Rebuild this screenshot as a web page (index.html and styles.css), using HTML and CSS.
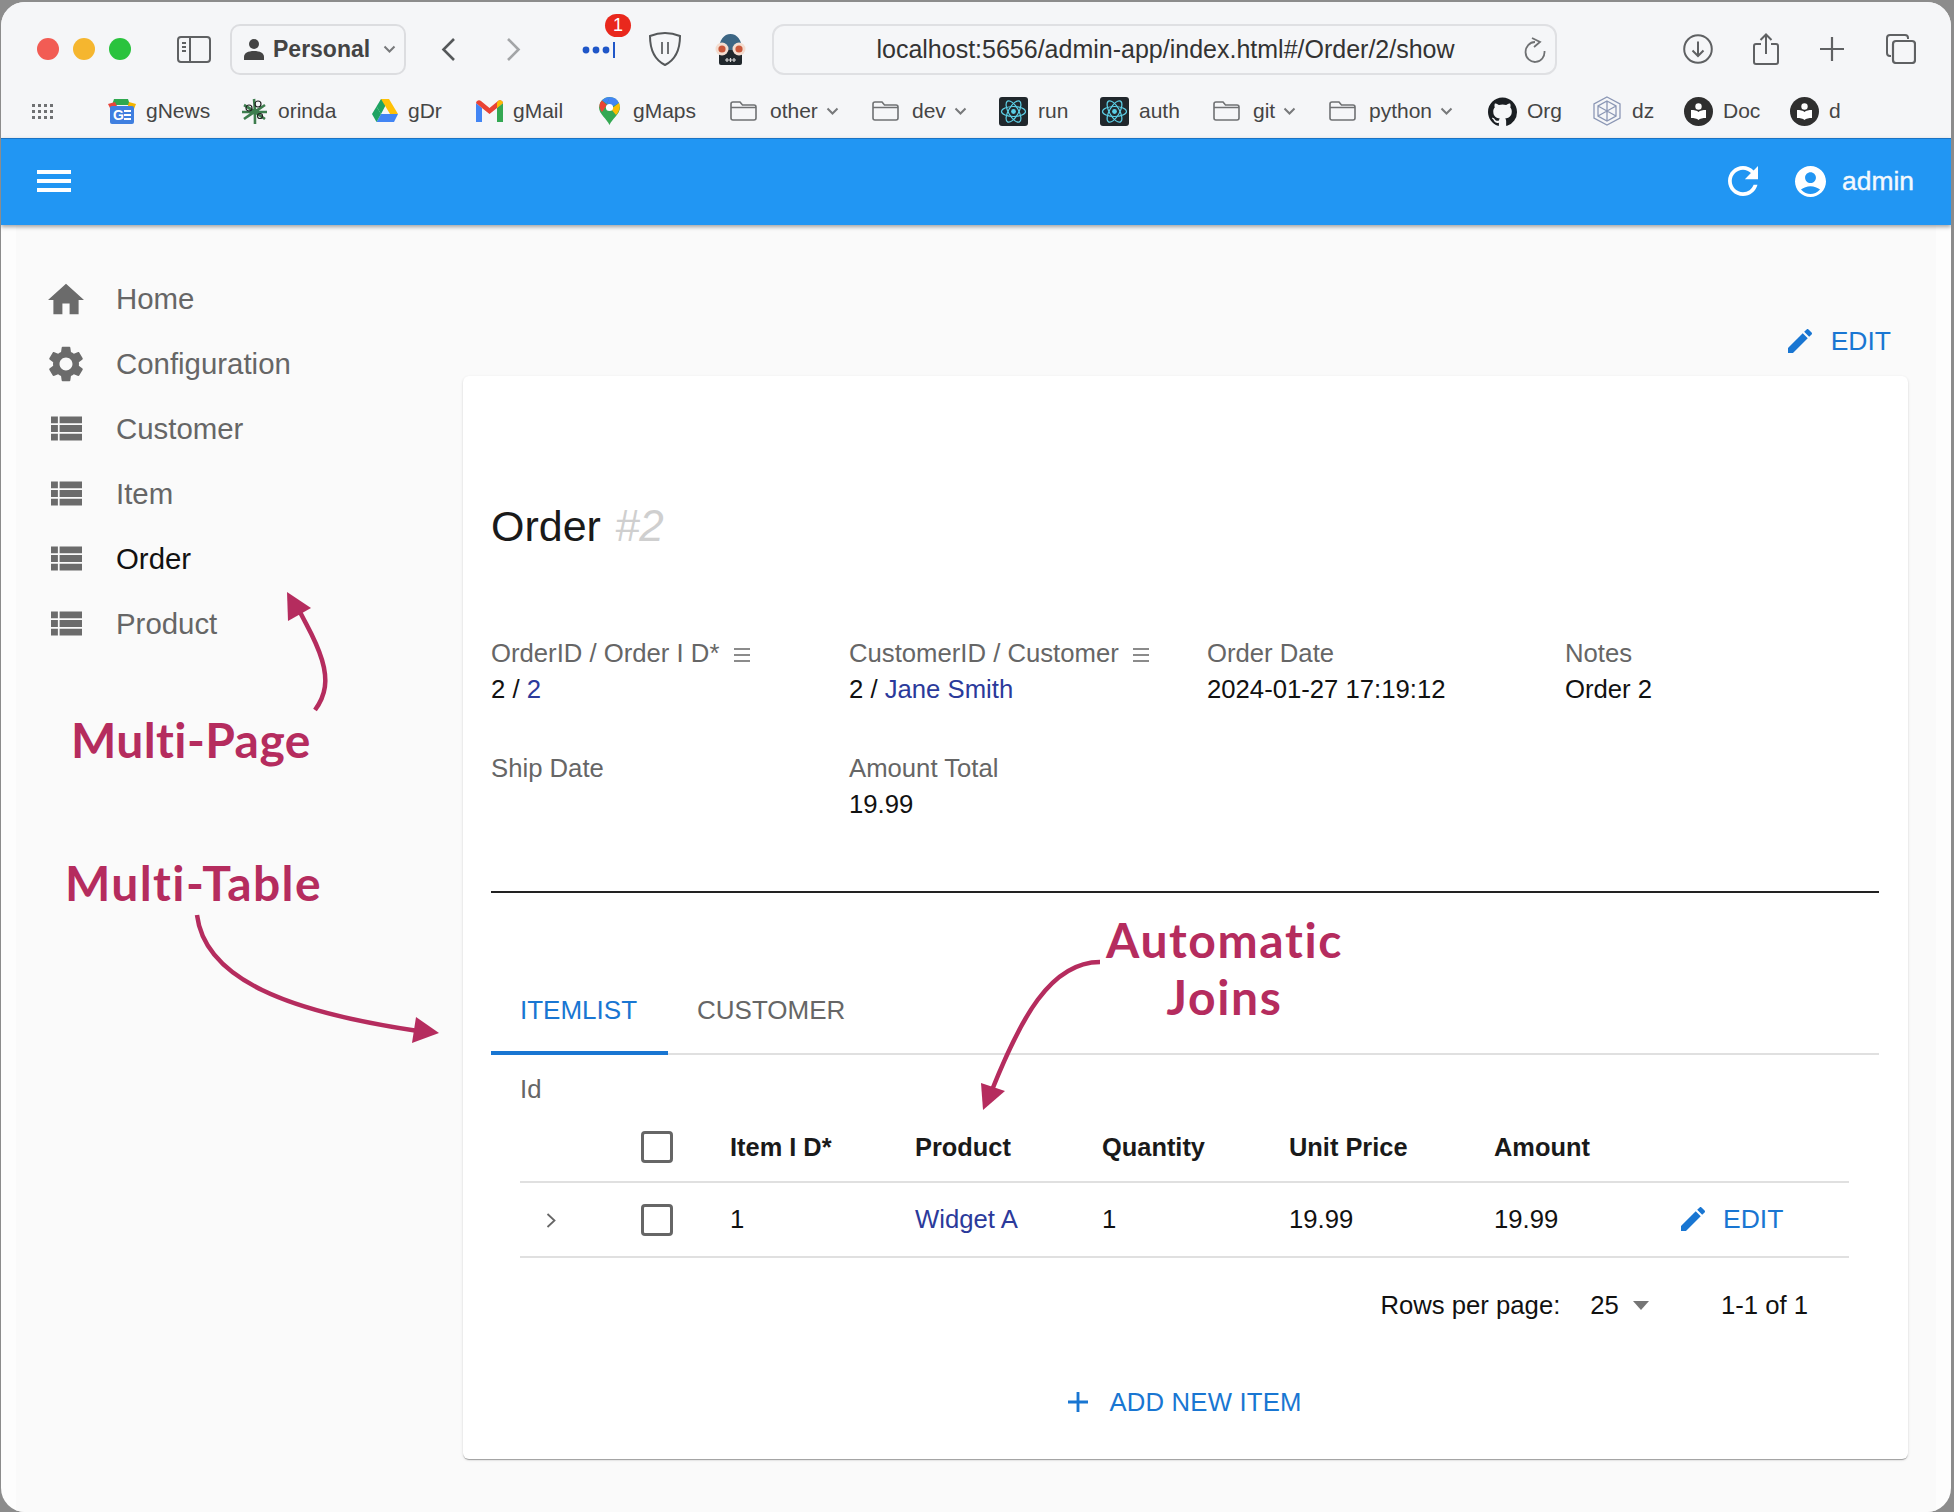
FILE: index.html
```html
<!DOCTYPE html>
<html lang="en">
<head>
  <meta charset="UTF-8" />
  <title>Order #2</title>
  <link rel="stylesheet" href="styles.css">
</head>
<body>
  <svg class="defs" width="0" height="0">
    <symbol id="i-list" viewBox="3 5 18 14"><path d="M3 14h4v-4H3v4zm0 5h4v-4H3v4zM3 9h4V5H3v4zm5 5h13v-4H8v4zm0 5h13v-4H8v4zM8 5v4h13V5H8z"/></symbol>
    <symbol id="i-edit" viewBox="3 3 18 18"><path d="M3 17.25V21h3.75L17.81 9.94l-3.75-3.75L3 17.25zM20.71 7.04c.39-.39.39-1.02 0-1.41l-2.34-2.34a.9959.9959 0 0 0-1.41 0l-1.83 1.83 3.75 3.75 1.83-1.83z"/></symbol>
    <symbol id="i-folder" viewBox="0 0 27 20"><path d="M1 17V3a2 2 0 0 1 2-2h7l2.500 3H24a2 2 0 0 1 2 2v11a2 2 0 0 1-2 2H3a2 2 0 0 1-2-2zM1 6.500h25" fill="none" stroke="#6f7173" stroke-width="1.600"/></symbol>
    <symbol id="i-chev" viewBox="0 0 13 8"><path d="M1.500 1.500 6.500 6.500 11.500 1.500" fill="none" stroke="#77797b" stroke-width="2"/></symbol>
    <symbol id="i-react" viewBox="0 0 29 29">
      <rect width="29" height="29" rx="3" fill="#20272c"/>
      <g fill="none" stroke="#5ccfe6" stroke-width="1.200">
        <ellipse cx="14.500" cy="14.500" rx="12" ry="5"/>
        <ellipse cx="14.500" cy="14.500" rx="12" ry="5" transform="rotate(60 14.500 14.500)"/>
        <ellipse cx="14.500" cy="14.500" rx="12" ry="5" transform="rotate(120 14.500 14.500)"/>
      </g>
      <circle cx="14.500" cy="14.500" r="2.400" fill="#5ccfe6"/>
    </symbol>
    <symbol id="i-book" viewBox="0 0 29 29">
      <circle cx="14.500" cy="14.500" r="14.500" fill="#2f2f2f"/>
      <path d="M7 13c3 0 6 .5 7.500 2 1.500-1.500 4.500-2 7.500-2v8c-3 0-6 .5-7.500 2-1.500-1.500-4.500-2-7.500-2z" fill="#fff"/>
      <circle cx="14.500" cy="9.500" r="3.200" fill="#fff"/>
    </symbol>
  </svg>

  <div class="window">
    <header class="chrome">
      <div class="toolbar">
        <div class="lights">
          <span class="light red"></span>
          <span class="light yellow"></span>
          <span class="light green"></span>
        </div>
        <svg class="sidebar-toggle" viewBox="0 0 34 27"><rect x="1" y="1" width="32" height="25" rx="3" fill="none" stroke="#5f6163" stroke-width="2"/><path d="M13 1v25" stroke="#5f6163" stroke-width="2"/><path d="M5 7h4M5 11h4M5 15h4" stroke="#5f6163" stroke-width="2"/></svg>
        <div class="profile">
          <svg class="profile-icon" viewBox="0 0 20 22"><circle cx="10" cy="6" r="5"/><path d="M0 22v-3c0-4 4-6 10-6s10 2 10 6v3z"/></svg>
          <span>Personal</span>
          <svg class="profile-chev"><use href="#i-chev"/></svg>
        </div>
        <svg class="nav-arrow back" viewBox="0 0 15 25"><path d="M13 2 2.500 12.500 13 23" fill="none" stroke="#55585a" stroke-width="2.600"/></svg>
        <svg class="nav-arrow forward" viewBox="0 0 15 25"><path d="M2 2l10.500 10.500L2 23" fill="none" stroke="#a3a5a7" stroke-width="2.600"/></svg>
        <div class="ext-pass">
          <svg viewBox="0 0 34 16" width="34" height="16"><g fill="#1f56c8"><circle cx="4" cy="8" r="3.400"/><circle cx="14" cy="8" r="3.400"/><circle cx="24" cy="8" r="3.400"/></g><rect x="31" y="0" width="2" height="16" fill="#1f56c8"/></svg>
          <span class="badge">1</span>
        </div>
        <svg class="ext-shield" viewBox="0 0 32 34"><path d="M16 1c5 0 10 1 15 3 0 12-3 23-15 29C4 27 1 16 1 4c5-2 10-3 15-3z" fill="none" stroke="#55585a" stroke-width="2"/><path d="M13 10v12M19 10v12" stroke="#6f7173" stroke-width="2"/></svg>
        <svg class="ext-spy" viewBox="0 0 33 31"><path d="M5 16C5 6 10 0 16.500 0S28 6 28 16z" fill="#3c6684"/><path d="M5 16h23v13a2 2 0 0 1-2 2H7a2 2 0 0 1-2-2z" fill="#20272c"/><circle cx="8" cy="15" r="6.500" fill="#f3ddd0"/><circle cx="25" cy="15" r="6.500" fill="#f3ddd0"/><circle cx="8" cy="15" r="3.600" fill="#c9573a"/><circle cx="25" cy="15" r="3.600" fill="#c9573a"/><path d="M11 26h11M13 24v4M16.500 24v4M20 24v4" stroke="#d8d8d8" stroke-width="1.200"/></svg>
        <div class="urlbar">
          <span class="url">localhost:5656/admin-app/index.html#/Order/2/show</span>
          <svg class="url-reload" viewBox="0 0 22 26"><path d="M11 5A9.500 10 0 1 0 20.500 14M8 1l8 4-6 5" fill="none" stroke="#6f7173" stroke-width="1.800"/></svg>
        </div>
        <svg class="tool download" viewBox="0 0 30 30"><circle cx="15" cy="15" r="13.800" fill="none" stroke="#5f6163" stroke-width="2"/><path d="M15 7.500v14M9.500 16.500l5.500 5.500 5.500-5.500" fill="none" stroke="#5f6163" stroke-width="2"/></svg>
        <svg class="tool share" viewBox="0 0 26 32"><path d="M8 11H3a2 2 0 0 0-2 2v16a2 2 0 0 0 2 2h20a2 2 0 0 0 2-2V13a2 2 0 0 0-2-2h-5M13 21V2M7.500 7 13 1.500 18.500 7" fill="none" stroke="#5f6163" stroke-width="2"/></svg>
        <svg class="tool plus" viewBox="0 0 24 24"><path d="M12 0v24M0 12h24" stroke="#5f6163" stroke-width="2.200"/></svg>
        <svg class="tool tabs-icon" viewBox="0 0 30 30"><path d="M5 22H4a3 3 0 0 1-3-3V4a3 3 0 0 1 3-3h15a3 3 0 0 1 3 3v1" fill="none" stroke="#5f6163" stroke-width="2"/><rect x="7" y="7" width="22" height="22" rx="3" fill="none" stroke="#5f6163" stroke-width="2.200"/></svg>
      </div>

      <nav class="bookmarks">
        <svg class="apps" viewBox="0 0 21 15"><g fill="#6f7173"><rect x="0" y="0" width="3" height="3"/><rect x="6" y="0" width="3" height="3"/><rect x="12" y="0" width="3" height="3"/><rect x="18" y="0" width="3" height="3"/><rect x="0" y="6" width="3" height="3"/><rect x="6" y="6" width="3" height="3"/><rect x="12" y="6" width="3" height="3"/><rect x="18" y="6" width="3" height="3"/><rect x="0" y="12" width="3" height="3"/><rect x="6" y="12" width="3" height="3"/><rect x="12" y="12" width="3" height="3"/><rect x="18" y="12" width="3" height="3"/></g></svg>
        <div class="bookmark">
          <svg class="bm-icon" width="28" height="25" viewBox="0 0 28 25"><path d="M6 0h14l2 6H4z" fill="#2fa84f"/><path d="M0 5l7-2 3 6H2z" fill="#e8453c"/><path d="M21 3l7 2-2 5h-7z" fill="#f4b400"/><rect x="2" y="7" width="24" height="18" rx="2" fill="#3f7fe0"/><text x="5" y="21" class="news-g">G</text><path d="M16 12h7M16 16h7M16 20h7" stroke="#fff" stroke-width="2"/></svg>
          <span>gNews</span>
        </div>
        <div class="bookmark">
          <svg class="bm-icon" width="27" height="27" viewBox="0 0 27 27"><g fill="none" stroke="#3d7d4e" stroke-width="2.600"><path d="M3 7c7 4 14 9 21 14M24 7C18 11 10 16 3 21M13 1c1 8 1 16 1 25M1 14h25"/></g><g fill="none" stroke="#222" stroke-width="1.200"><circle cx="8" cy="10" r="3"/><circle cx="19" cy="18" r="2.500"/><circle cx="17" cy="6" r="3"/></g></svg>
          <span>orinda</span>
        </div>
        <div class="bookmark">
          <svg class="bm-icon" width="26" height="24" viewBox="0 0 26 24"><path d="M9 0h8L9 15 4.500 7.500z" fill="#1ea362"/><path d="M9 0h8l9 15h-8z" fill="#ffc107"/><path d="M18 15h8l-4 8H4.500L9 15z" fill="#4285f4"/><path d="M0 15 4.500 7.500 9 15l-4.500 8z" fill="#1ea362"/></svg>
          <span>gDr</span>
        </div>
        <div class="bookmark">
          <svg class="bm-icon" width="27" height="22" viewBox="0 0 27 22"><path d="M0 3v19h6V8z" fill="#4285f4"/><path d="M21 8v14h6V3z" fill="#34a853"/><path d="M0 3a3 3 0 0 1 5-2l8.500 7L22 1a3 3 0 0 1 5 2l-6 5-7.500 6L6 8z" fill="#ea4335"/><path d="M22 1a3 3 0 0 1 5 2l-6 5V3z" fill="#fbbc04"/></svg>
          <span>gMail</span>
        </div>
        <div class="bookmark wide-gap">
          <svg class="bm-icon" width="21" height="28" viewBox="0 0 21 28"><path d="M10.500 28C8 22 0 17 0 10.500a10.500 10.500 0 0 1 21 0C21 17 13 22 10.500 28z" fill="#34a853"/><path d="M3 3.500a10.500 10.500 0 0 1 7.500-3.500L8 7z" fill="#4285f4"/><path d="M3 3.500 8 8 3 15C.5 12-1 7 3 3.500z" fill="#ea4335"/><path d="M10.500 0A10.500 10.500 0 0 1 20 6l-7 4-5-3z" fill="#4285f4"/><path d="M20 6c2 4 0 9-3 12l-5-6z" fill="#fbbc04"/><circle cx="10.500" cy="10.500" r="3.600" fill="#fff"/></svg>
          <span>gMaps</span>
        </div>
        <div class="bookmark wide-gap">
          <svg class="bm-icon" width="27" height="20"><use href="#i-folder"/></svg>
          <span>other</span>
          <svg class="bm-chev"><use href="#i-chev"/></svg>
        </div>
        <div class="bookmark wide-gap">
          <svg class="bm-icon" width="27" height="20"><use href="#i-folder"/></svg>
          <span>dev</span>
          <svg class="bm-chev"><use href="#i-chev"/></svg>
        </div>
        <div class="bookmark">
          <svg class="bm-icon" width="29" height="29"><use href="#i-react"/></svg>
          <span>run</span>
        </div>
        <div class="bookmark">
          <svg class="bm-icon" width="29" height="29"><use href="#i-react"/></svg>
          <span>auth</span>
        </div>
        <div class="bookmark wide-gap">
          <svg class="bm-icon" width="27" height="20"><use href="#i-folder"/></svg>
          <span>git</span>
          <svg class="bm-chev"><use href="#i-chev"/></svg>
        </div>
        <div class="bookmark wide-gap">
          <svg class="bm-icon" width="27" height="20"><use href="#i-folder"/></svg>
          <span>python</span>
          <svg class="bm-chev"><use href="#i-chev"/></svg>
        </div>
        <div class="bookmark">
          <svg class="bm-icon" width="29" height="29" viewBox="0 0 24 24"><path fill="#1b1f23" d="M12 .5C5.370.5 0 5.870 0 12.500c0 5.300 3.440 9.800 8.200 11.390.6.110.82-.26.82-.58v-2.030c-3.340.73-4.040-1.610-4.040-1.610-.55-1.390-1.340-1.760-1.340-1.760-1.090-.74.08-.73.08-.73 1.210.08 1.840 1.240 1.840 1.240 1.070 1.840 2.810 1.310 3.500 1 .11-.78.42-1.310.76-1.610-2.670-.3-5.470-1.330-5.470-5.930 0-1.310.47-2.380 1.240-3.220-.13-.3-.54-1.520.12-3.180 0 0 1.010-.32 3.300 1.230a11.500 11.500 0 0 1 6.010 0c2.290-1.550 3.300-1.230 3.300-1.230.66 1.660.25 2.880.12 3.180.77.84 1.240 1.910 1.240 3.220 0 4.610-2.810 5.620-5.480 5.920.43.37.81 1.100.81 2.220v3.290c0 .32.22.69.83.58A12 12 0 0 0 24 12.500C24 5.870 18.630.5 12 .5z"/></svg>
          <span>Org</span>
        </div>
        <div class="bookmark">
          <svg class="bm-icon" width="30" height="30" viewBox="0 0 30 30"><g fill="none" stroke="#8b97b5" stroke-width="1.300"><path d="M15 1 28 8v14l-13 7-13-7V8z"/><path d="M15 5 24 10v10l-9 5-9-5V10zM6 10l18 10M24 10 6 20M15 5v20"/></g></svg>
          <span>dz</span>
        </div>
        <div class="bookmark">
          <svg class="bm-icon" width="29" height="29"><use href="#i-book"/></svg>
          <span>Doc</span>
        </div>
        <div class="bookmark">
          <svg class="bm-icon" width="29" height="29"><use href="#i-book"/></svg>
          <span>d</span>
        </div>
      </nav>
    </header>

    <div class="appbar">
      <button class="menu-btn"><span></span><span></span><span></span></button>
      <svg class="appbar-refresh" viewBox="4 4 16 16"><path d="M17.650 6.350C16.200 4.900 14.210 4 12 4c-4.420 0-7.990 3.580-7.990 8s3.570 8 7.990 8c3.730 0 6.840-2.550 7.730-6h-2.080c-.82 2.330-3.040 4-5.650 4-3.310 0-6-2.690-6-6s2.690-6 6-6c1.660 0 3.140.69 4.220 1.780L13 11h7V4l-2.350 2.350z"/></svg>
      <svg class="appbar-user" viewBox="2 2 20 20"><path d="M12 2C6.480 2 2 6.480 2 12s4.480 10 10 10 10-4.480 10-10S17.520 2 12 2zm0 4c1.930 0 3.500 1.570 3.500 3.500S13.930 13 12 13s-3.500-1.570-3.500-3.500S10.070 6 12 6zm0 14c-2.030 0-4.430-.82-6.140-2.880C7.550 15.800 9.680 15 12 15s4.450.8 6.140 2.120C16.430 19.180 14.030 20 12 20z"/></svg>
      <span class="appbar-name">admin</span>
    </div>

    <main class="page">
      <aside class="sidenav">
        <a class="nav-item">
          <svg class="nav-icon" viewBox="2 3 20 17"><path d="M10 20v-6h4v6h5v-8h3L12 3 2 12h3v8z"/></svg>
          <span>Home</span>
        </a>
        <a class="nav-item">
          <svg class="nav-icon" viewBox="2.500 2 19 20"><path d="M19.140 12.940c.04-.3.06-.61.06-.94 0-.32-.02-.64-.07-.94l2.030-1.580c.18-.14.23-.41.12-.61l-1.920-3.320c-.12-.22-.37-.29-.59-.22l-2.390.96c-.5-.38-1.030-.7-1.620-.94l-.36-2.540c-.04-.24-.24-.41-.48-.41h-3.840c-.24 0-.43.17-.47.41l-.36 2.540c-.59.24-1.130.57-1.620.94l-2.390-.96c-.22-.08-.47 0-.59.22L2.740 8.870c-.12.21-.08.47.12.61l2.030 1.580c-.05.3-.09.63-.09.94s.02.64.07.94l-2.030 1.580c-.18.14-.23.41-.12.61l1.920 3.320c.12.22.37.29.59.22l2.390-.96c.5.38 1.030.7 1.620.94l.36 2.540c.05.24.24.41.48.41h3.840c.24 0 .44-.17.47-.41l.36-2.540c.59-.24 1.130-.56 1.620-.94l2.390.96c.22.08.47 0 .59-.22l1.920-3.320c.12-.22.07-.47-.12-.61l-2.010-1.580zM12 15.600c-1.980 0-3.600-1.620-3.600-3.600s1.620-3.600 3.600-3.600 3.600 1.620 3.600 3.600-1.620 3.600-3.600 3.600z"/></svg>
          <span>Configuration</span>
        </a>
        <a class="nav-item">
          <svg class="nav-icon list"><use href="#i-list"/></svg>
          <span>Customer</span>
        </a>
        <a class="nav-item">
          <svg class="nav-icon list"><use href="#i-list"/></svg>
          <span>Item</span>
        </a>
        <a class="nav-item active">
          <svg class="nav-icon list"><use href="#i-list"/></svg>
          <span>Order</span>
        </a>
        <a class="nav-item">
          <svg class="nav-icon list"><use href="#i-list"/></svg>
          <span>Product</span>
        </a>
      </aside>

      <section class="content">
        <div class="actions">
          <a class="edit-link">
            <svg class="edit-icon"><use href="#i-edit"/></svg>
            EDIT
          </a>
        </div>

        <article class="card">
          <h1 class="title">Order <em>#2</em></h1>

          <div class="fields">
            <div class="field">
              <div class="field-label">OrderID / Order I D*
                <svg class="mini-menu" viewBox="0 0 16 14"><path d="M0 1h16M0 7h16M0 13h16" stroke="#666" stroke-width="1.500"/></svg>
              </div>
              <div class="field-value">2 / <a class="ref">2</a></div>
            </div>
            <div class="field">
              <div class="field-label">CustomerID / Customer
                <svg class="mini-menu" viewBox="0 0 16 14"><path d="M0 1h16M0 7h16M0 13h16" stroke="#666" stroke-width="1.500"/></svg>
              </div>
              <div class="field-value">2 / <a class="ref">Jane Smith</a></div>
            </div>
            <div class="field">
              <div class="field-label">Order Date</div>
              <div class="field-value">2024-01-27 17:19:12</div>
            </div>
            <div class="field">
              <div class="field-label">Notes</div>
              <div class="field-value">Order 2</div>
            </div>
            <div class="field">
              <div class="field-label">Ship Date</div>
              <div class="field-value"></div>
            </div>
            <div class="field">
              <div class="field-label">Amount Total</div>
              <div class="field-value">19.99</div>
            </div>
          </div>

          <hr class="divider">

          <div class="tabs">
            <div class="tab active">ITEMLIST</div>
            <div class="tab">CUSTOMER</div>
          </div>

          <div class="id-label">Id</div>

          <table class="items">
            <colgroup>
              <col class="c-expand"><col class="c-check"><col class="c-item"><col class="c-std"><col class="c-std"><col class="c-wide"><col class="c-std"><col class="c-last">
            </colgroup>
            <thead>
              <tr>
                <th></th>
                <th><span class="checkbox"></span></th>
                <th>Item I D*</th>
                <th>Product</th>
                <th>Quantity</th>
                <th>Unit Price</th>
                <th>Amount</th>
                <th></th>
              </tr>
            </thead>
            <tbody>
              <tr>
                <td class="expand"><svg viewBox="0 0 10 15" width="10" height="15"><path d="M1.500 1 8.500 7.500 1.500 14" fill="none" stroke="#666" stroke-width="1.800"/></svg></td>
                <td><span class="checkbox"></span></td>
                <td>1</td>
                <td><a class="ref">Widget A</a></td>
                <td>1</td>
                <td>19.99</td>
                <td>19.99</td>
                <td><a class="edit-link row-edit"><svg class="edit-icon"><use href="#i-edit"/></svg>EDIT</a></td>
              </tr>
            </tbody>
          </table>

          <div class="pagination">
            <span>Rows per page:</span>
            <span class="page-size">25<i class="caret"></i></span>
            <span>1-1 of 1</span>
          </div>

          <div class="add-row">
            <a class="add-link">
              <svg class="add-icon" viewBox="5 5 14 14"><path d="M19 13h-6v6h-2v-6H5v-2h6V5h2v6h6v2z"/></svg>
              ADD NEW ITEM
            </a>
          </div>
        </article>
      </section>
    </main>
  </div>

  <!-- hand drawn notes lying over the page -->
  <svg class="notes" viewBox="0 0 1954 1512">
    <g fill="none" stroke="#b52c5e" stroke-width="4.500">
      <path d="M315 710C326 695 328 680 322 660 316 640 308 628 300 612"/>
      <path d="M197 915C205 980 290 1012 418 1031"/>
      <path d="M1100 962C1050 962 1020 1020 992 1090"/>
    </g>
    <g fill="#b52c5e">
      <path d="M287 592 311 608 288 621z"/>
      <path d="M439 1033 416 1017 412 1043z"/>
      <path d="M983 1110 981 1083 1005 1091z"/>
    </g>
  </svg>
  <div class="note note-page">Multi-Page</div>
  <div class="note note-table">Multi-Table</div>
  <div class="note note-joins">Automatic<br>Joins</div>
</body>
</html>
```
FILE: styles.css
```css
* {
  box-sizing: border-box;
}

html, body {
  margin: 0;
  height: 1512px;
  overflow: hidden;
}

body {
  position: relative;
  background: #8c8c8c;
  font-family: "Liberation Sans", Arial, sans-serif;
  color: #1a1a1a;
}

.defs {
  position: absolute;
}

a {
  color: inherit;
  text-decoration: none;
}

/* Browser window */
.window {
  display: flex;
  flex-direction: column;
  height: 1510px;
  margin: 2px 3px 0 1px;
  background: #fdfdfd;
  border-radius: 24px;
  overflow: hidden;
}

.chrome {
  background: #f5f6f8;
  height: 136px;
}

.toolbar {
  display: flex;
  align-items: center;
  height: 94px;
  padding: 0 0 0 36px;
}

.lights {
  display: flex;
  gap: 14px;
  margin-right: 46px;
}

.light {
  width: 22px;
  height: 22px;
  border-radius: 50%;
}

.light.red { background: #f25c54; }
.light.yellow { background: #f5b62f; }
.light.green { background: #2ac33e; }

.sidebar-toggle {
  width: 34px;
  height: 27px;
  margin-right: 19px;
}

.profile {
  display: flex;
  align-items: center;
  width: 176px;
  height: 51px;
  padding-left: 12px;
  border: 2px solid #dcdde0;
  border-radius: 10px;
  font-size: 23px;
  font-weight: bold;
  color: #444;
}

.profile-icon {
  width: 20px;
  height: 22px;
  fill: #444;
  margin-right: 9px;
}

.profile-chev {
  width: 13px;
  height: 8px;
  margin-left: 13px;
}

.nav-arrow {
  width: 15px;
  height: 25px;
}

.nav-arrow.back { margin-left: 35px; }
.nav-arrow.forward { margin-left: 50px; }

.ext-pass {
  position: relative;
  display: flex;
  margin-left: 61px;
  margin-top: 2px;
}

.badge {
  position: absolute;
  top: -28px;
  left: 23px;
  width: 26px;
  height: 23px;
  border-radius: 11.500px;
  background: #e9281d;
  color: #fff;
  font-size: 18px;
  line-height: 23px;
  text-align: center;
}

.ext-shield {
  width: 32px;
  height: 34px;
  margin-left: 33px;
}

.ext-spy {
  width: 33px;
  height: 31px;
  margin-left: 33px;
}

.urlbar {
  display: flex;
  align-items: center;
  justify-content: center;
  position: relative;
  width: 785px;
  height: 51px;
  margin-left: 25px;
  border: 2px solid #dfe0e3;
  border-radius: 12px;
}

.url {
  font-size: 25px;
  color: #333;
  margin-left: 2px;
}

.url-reload {
  position: absolute;
  right: 9px;
  top: 11px;
  width: 22px;
  height: 26px;
}

.tool { flex: none; }
.download { width: 30px; height: 30px; margin-left: 126px; }
.share { width: 26px; height: 32px; margin-left: 40px; }
.plus { width: 24px; height: 24px; margin-left: 41px; }
.tabs-icon { width: 30px; height: 30px; margin-left: 42px; }

/* Bookmarks bar, columns at the spots of each favourite */
.bookmarks {
  display: grid;
  grid-template-columns: 76px 133px 131px 104px 123px 131px 142px 127px 101px 113px 116px 159px 104px 92px 106px auto;
  align-items: center;
  height: 26px;
  padding-left: 31px;
  font-size: 21px;
  color: #454545;
}

.apps {
  width: 21px;
  height: 15px;
}

.bookmark {
  display: flex;
  align-items: center;
  gap: 10px;
  white-space: nowrap;
}

.bookmark.wide-gap {
  gap: 13px;
}

.bm-chev {
  width: 13px;
  height: 8px;
  margin-left: -5px;
}

.news-g {
  font-size: 14px;
  font-weight: bold;
  fill: #fff;
}

/* App bar */
.appbar {
  display: flex;
  align-items: center;
  height: 87px;
  flex: none;
  padding: 0 37px 2px 36px;
  background: #2196f3;
  border-top: 1px solid #1a73c4;
  box-shadow: 0 2px 4px rgba(0, 0, 0, 0.35);
  color: #fff;
  position: relative;
  z-index: 1;
}

.menu-btn {
  display: flex;
  flex-direction: column;
  gap: 5px;
  width: 34px;
  padding: 0;
  border: 0;
  background: none;
  margin-right: auto;
}

.menu-btn span {
  height: 4px;
  background: #fff;
}

.appbar-refresh {
  width: 30px;
  height: 30px;
  fill: #fff;
}

.appbar-user {
  width: 31px;
  height: 31px;
  fill: #fff;
  margin-left: 37px;
}

.appbar-name {
  margin-left: 16px;
  font-size: 26.400px;
  -webkit-text-stroke: 0.4px #fff;
  opacity: 0.95;
}

/* Page body */
.page {
  display: flex;
  flex: 1;
  margin: 0 15px;
  background: #fafafa;
}

.sidenav {
  width: 447px;
  flex: none;
  padding-top: 41px;
}

.nav-item {
  display: flex;
  align-items: center;
  height: 65px;
  padding-left: 32px;
  font-size: 29.400px;
  color: #666;
}

.nav-item.active {
  color: #111;
}

.nav-icon {
  width: 36px;
  height: 36px;
  fill: #6b6b6b;
  margin-right: 32px;
  flex: none;
}

.nav-icon.list {
  width: 31px;
  height: 25px;
  margin-left: 3px;
  margin-right: 34px;
}

.content {
  display: flex;
  flex-direction: column;
  flex: 1;
  padding-right: 28px;
}

.actions {
  display: flex;
  justify-content: flex-end;
  align-items: flex-end;
  height: 151px;
  padding: 0 17px 17px 0;
}

.edit-link {
  display: flex;
  align-items: center;
  gap: 19px;
  font-size: 26.500px;
  line-height: 36px;
  color: #1976d2;
}

.edit-icon {
  width: 24px;
  height: 24px;
  fill: #1976d2;
}

.row-edit {
  gap: 18px;
  margin-top: -2px;
}

/* Order card */
.card {
  display: flex;
  flex-direction: column;
  padding: 0 29px 9px 28px;
  background: #fff;
  border-radius: 6px;
  box-shadow: 0 2px 1px -1px rgba(0, 0, 0, 0.2), 0 1px 1px 0 rgba(0, 0, 0, 0.14), 0 1px 3px 0 rgba(0, 0, 0, 0.12);
}

.title {
  margin: 125px 0 0;
  font-size: 43px;
  font-weight: normal;
  line-height: 50px;
  color: #1a1a1a;
}

.title em {
  margin-left: 2px;
  font-size: 44px;
  color: #cfcfcf;
}

.fields {
  display: grid;
  grid-template-columns: 358px 358px 358px 1fr;
  row-gap: 43px;
  margin-top: 84px;
  font-size: 25.7px;
  line-height: 36px;
}

.field-label {
  color: #666;
  white-space: nowrap;
}

.field-value {
  min-height: 36px;
  color: #111;
}

.mini-menu {
  width: 16px;
  height: 14px;
  margin-left: 7px;
}

.ref {
  color: #2b3a9b;
}

.divider {
  margin: 69px 0 0;
  border: 0;
  height: 2px;
  background: #222;
}

.tabs {
  display: flex;
  margin-top: 72px;
  border-bottom: 2px solid #e0e0e0;
  font-size: 26px;
}

.tab {
  height: 90px;
  line-height: 90px;
  padding: 0 31px 0 29px;
  margin-bottom: -2px;
  color: #666;
}

.tab.active {
  color: #1976d2;
  border-bottom: 4px solid #1976d2;
}

.id-label {
  margin-top: 16px;
  padding-left: 29px;
  font-size: 25.7px;
  line-height: 36px;
  color: #666;
}

.items {
  width: 1329px;
  margin: 6px 0 0 29px;
  border-collapse: collapse;
  table-layout: fixed;
  font-size: 25.7px;
}

.c-expand { width: 105px; }
.c-check { width: 89px; }
.c-item { width: 185px; }
.c-std { width: 187px; }
.c-wide { width: 205px; }
.c-last { width: 184px; }

.items th, .items td {
  padding: 0 0 0 16px;
  border-bottom: 2px solid #e0e0e0;
  text-align: left;
  white-space: nowrap;
}

.items th {
  height: 69px;
  font-size: 25.400px;
  color: #1a1a1a;
}

.items td {
  height: 75px;
  color: #111;
}

.items td.expand {
  padding-left: 26px;
}

.checkbox {
  display: block;
  width: 32px;
  height: 32px;
  border: 3px solid #666;
  border-radius: 4px;
}

.pagination {
  display: flex;
  justify-content: flex-end;
  align-items: center;
  gap: 30px;
  height: 96px;
  padding: 0 71px 1px 0;
  font-size: 25.7px;
  color: #111;
}

.page-size {
  display: flex;
  align-items: center;
  gap: 14px;
  margin-right: 42px;
}

.caret {
  width: 0;
  height: 0;
  border-left: 8.500px solid transparent;
  border-right: 8.500px solid transparent;
  border-top: 9px solid #757575;
}

.add-row {
  display: flex;
  justify-content: center;
  align-items: center;
  height: 96px;
}

.add-link {
  display: flex;
  align-items: center;
  gap: 21px;
  font-size: 25.7px;
  letter-spacing: 0.2px;
  color: #1976d2;
}

.add-icon {
  width: 20px;
  height: 20px;
  fill: #1976d2;
}

/* Red notes drawn on top of the screenshot */
.notes {
  position: absolute;
  top: 0;
  left: 0;
  width: 1954px;
  height: 1512px;
  pointer-events: none;
}

.note {
  position: absolute;
  font-family: Lato, "Open Sans", sans-serif;
  font-weight: bold;
  font-size: 48px;
  line-height: 57px;
  font-variant-ligatures: none;
  letter-spacing: 1.600px;
  color: #b52c5e;
  white-space: nowrap;
}

.note-page { left: 71px; top: 711px; letter-spacing: 0.4px; }
.note-table { left: 65px; top: 854px; letter-spacing: 1.400px; }
.note-joins { left: 1106px; top: 911px; text-align: center; }
```
